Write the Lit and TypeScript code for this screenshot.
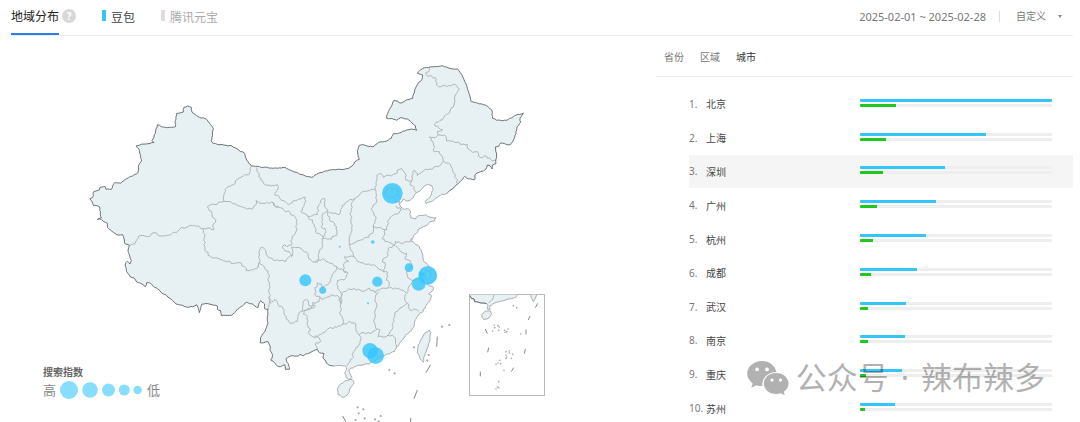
import { LitElement, html, svg, css } from "lit";
import { customElement, property, state } from "lit/decorators.js";

type Point = [number, number];

/* Map geometry is stored in tiles. Each tile has its own origin; one map unit is a third of a pixel. */
const parse = (ox: number, oy: number, data: string): Point[] =>
  data.trim().split(/\s+/).map((pair) => {
    const [x, y] = pair.split(",").map(Number);
    return [x + ox, y + oy] as Point;
  });

const west = (d: string) => parse(240, 270, d);
const centre = (d: string) => parse(690, 390, d);
const northEast = (d: string) => parse(1110, 165, d);
const south = (d: string) => parse(720, 720, d);
const east = (d: string) => parse(1110, 540, d);
const himalaya = (d: string) => parse(390, 780, d);
const southSea = (d: string) => parse(990, 1080, d);
const inset = (d: string) => parse(1380, 855, d);

/* Adds small repeatable bends so that borders and shores look natural. */
const roughen = (points: Point[], amount = 3.4): Point[] => {
  const out: Point[] = [points[0]];
  for (let i = 1; i < points.length; i++) {
    const [ax, ay] = points[i - 1];
    const [bx, by] = points[i];
    const length = Math.hypot(bx - ax, by - ay);
    const steps = Math.max(1, Math.round(length / 6));
    for (let s = 1; s < steps; s++) {
      const t = s / steps;
      const x = ax + (bx - ax) * t;
      const y = ay + (by - ay) * t;
      const noise = Math.sin(x * 12.9898 + y * 78.233) * 43758.5453;
      const shift = (noise - Math.floor(noise) - 0.5) * 2 * amount;
      out.push([x - ((by - ay) / length) * shift, y + ((bx - ax) / length) * shift]);
    }
    out.push([bx, by]);
  }
  return out;
};

const line = (points: Point[]) =>
  "M" + points.map(([x, y]) => `${x.toFixed(1)} ${y.toFixed(1)}`).join("L");

const landBorder = roughen([
  ...south(`280,378 268,376 258,366 249,352 252,340 238,338 232,328 222,332 210,338 196,342 190,348 180,343
    176,348 152,348 138,356 140,364 146,372 148,388 136,388 134,374 122,380 112,378 100,364 92,360 98,346
    92,334 90,318 84,305 72,308 60,308 62,292 72,278 80,262 84,250 82,232 84,208 74,206 74,192 62,182
    58,188 54,202`),
  ...himalaya(`380,142 370,134 350,127 332,140 322,148 310,162 304,166 274,167 272,152 262,148 262,138
    246,134 228,130 216,132 212,146 208,158 204,142 200,134 188,140 172,142 158,136 146,134 138,132
    128,122 118,114 106,104 94,98 84,88 70,78 62,70 50,68 46,80 36,72 20,66 12,54 0,50`),
  ...west(`140,545 136,522 142,514 150,522 154,512 148,494 144,480 148,466 134,460 128,434 110,434 96,424
    82,412 82,400 70,394 64,388 52,388 64,384 58,350 40,346 36,334 30,326 38,322 40,306 58,300 60,292
    76,290 78,298 94,298 104,278 122,280 140,266 174,248 176,226 184,214 182,196 176,176 168,168 186,162
    222,158 216,152 226,130 232,104 244,110 262,113 286,110 286,92 290,70 310,66 312,52 322,48 334,52
    336,66 358,82 380,88 392,104 400,116 396,142 394,152 400,160 420,164 456,168 476,180 494,190 500,210
    514,228`),
  ...centre(`100,112 130,115 165,112 185,122 210,133 245,142 270,128 298,120 330,118 355,116 366,108
    374,96 388,88 384,76 382,62 388,46 400,44 416,50`),
  ...northEast(`12,274 26,262 50,258 64,250 70,236 88,234 104,228 124,222 140,226 136,212 126,204 112,192
    92,188 80,196 66,190 50,190 50,182 58,164 72,136 94,144 112,134 128,130 134,104 146,82 156,74 158,60
    142,54 152,44 164,38 186,36 218,32 240,40 262,42 274,58 284,80 292,100 298,118 304,140 322,144
    346,150 366,166 368,190 380,196 410,196 434,182 460,174 456,182 450,190 452,202 442,214 438,236
    430,256 420,270 404,266 392,264 386,274 376,276 380,300 378,326 368,330 366,342 360,332 352,330
    348,342 340,348 332,350 316,358 314,374 296,372 284,364 274,376 262,388 252,398 240,406 232,414`),
], 1.4);

const coast = roughen([
  ...northEast(`232,414 214,418 196,430 182,440 168,446 166,440 176,430 184,418 190,404 186,392 172,388
    160,396 150,408 138,414 130,428 114,438 100,432 96,440 88,446 92,456 98,460 120,466 122,488 136,492 146,482 164,480
    180,486 198,488 194,498 180,500 168,512 150,520 134,538`),
  ...east(`122,182 134,190 148,200 158,222 160,242 172,254 178,262 196,280 198,296 182,308 170,312
    180,318 190,322 186,334 176,342 184,346 180,362 172,370 166,384 154,398 146,404 140,412 134,424
    132,440 118,456 106,466 98,480 86,496 80,502`),
  ...south(`464,334 448,342 432,346 410,358 384,372 360,376 344,380 328,388 330,400 336,412 326,418
    318,412 314,400 320,388 316,378 300,376 280,378`),
], 2.2);

const islands = [
  south("298,436 316,422 336,418 342,430 330,444 326,460 310,472 294,464 292,448 298,436"),
  east("162,462 178,450 182,458 180,480 170,510 162,530 160,547 150,536 142,518 144,500 152,480 162,462"),
].map((p) => roughen(p, 1.2));

const provinces = [
  west("148,466 164,462 176,438 208,440 222,428 240,438 262,436 290,428 300,416 324,410 344,407 372,416"),
  west("372,416 402,418 400,402 408,390 396,378 394,364 382,350 432,334"),
  west("432,334 430,326 440,294 460,284 472,268 490,258 506,254 510,234 514,230"),
  west("432,334 450,334 472,346 490,352 516,358 526,346 528,332 546,340 562,336 580,340 590,352 600,354"),
  west("368,416 374,440 374,480 390,498 420,508 460,520 480,518 496,532 498,542 520,540 534,530 538,516"),
  centre("84,412 88,398 90,358 98,352 108,366 112,378 130,390 168,394 178,380 188,376 188,360 184,352"),
  centre("88,398 104,412 114,430 120,470 118,490 122,520"),
  centre("80,112 92,150 112,166 142,164 144,176 134,190 150,206 176,224 190,212 214,206 226,202 228,214 212,244 222,250 234,260"),
  centre("234,260 250,256 262,254 264,230 272,212 284,206 284,228 294,246 278,252 278,270 274,292 286,296 288,306 278,320 270,312 256,306 254,290 248,270 234,260"),
  centre("294,246 298,268 320,290 320,316 306,320 304,328 276,326 278,316"),
  centre("298,248 328,254 332,238 346,218 360,208 374,206"),
  centre("276,326 278,346 266,372 266,388 256,396"),
  centre("150,234 180,248 198,266 200,300 186,320 184,346 158,348 162,358 180,370 184,382"),
  centre("150,234 126,216"),
  centre("184,352 204,352 230,366 236,386 256,396 284,388 300,400 318,408"),
  centre("318,408 320,420 306,440 300,456 282,470 262,458 256,480 254,494 270,500"),
  centre("318,408 340,422 354,430 342,450 322,452 322,474 334,490 330,510 332,522"),
  centre("270,500 280,508 300,500 304,494 316,498 326,500 332,522"),
  centre("218,544 230,540 246,530 248,518 268,514 270,502"),
  south("90,190 104,178 114,194 128,204 132,220 144,240 150,250 172,244 176,222 188,208 190,184 200,178 206,196 222,194"),
  south("90,168 84,208"),
  south("222,194 222,204 192,212 190,222 202,230 204,262 212,270 206,280 212,286 222,292 238,294 242,304 228,308 232,328"),
  south("302,192 304,206 300,224 310,240 306,254"),
  south("222,292 238,284 262,268 290,262 306,254 330,244 348,252 348,272 358,286"),
  south("358,286 362,300 354,320 342,334 336,356 320,378"),
  south("358,286 366,278 390,280 410,268"),
  south("410,268 404,250 404,220 410,200 404,180 408,164 416,156"),
  south("302,192 306,160 322,150 344,146 366,154 388,144 396,152 410,160"),
  centre("354,430 340,420 342,400 356,394 344,380 372,380 382,394 404,402 430,404 444,414 462,426"),
  centre("462,426 474,428 470,444 478,460 474,474 448,480 434,486"),
  centre("374,206 364,226 362,256 366,290 358,330 358,344 364,362 372,380"),
  centre("358,342 386,332 410,322 428,310"),
  centre("428,310 430,290 438,266 424,236 440,216 438,190 436,178"),
  centre("374,206 386,198 400,184 424,178 436,178"),
  centre("436,178 438,160 440,136 452,130 460,142 478,136 498,132 502,120 516,116 524,128 528,150 546,152"),
  northEast("126,376 128,350 134,346 142,362 156,350 180,342 210,332 220,318"),
  northEast("126,376 120,390 132,398 138,412"),
  northEast("220,318 214,300 208,290 192,290 190,266 178,246 196,248 206,240"),
  northEast("206,240 204,228 218,224 206,218 194,208 210,196 236,176 252,150 256,120 268,102 250,88 230,94 204,94 196,68 174,64 168,52 178,48 178,38"),
  northEast("206,240 224,240 230,258 260,262 276,268 292,268 294,282 308,292 322,290 332,308 350,304 362,314 378,316"),
  northEast("220,318 236,324 248,346 256,358 262,386"),
  centre("428,290 464,298 470,300 472,286 480,264 500,252 514,240 498,228"),
  centre("466,298 456,326 478,338 490,346"),
  centre("490,346 496,334 512,340 540,336 548,328"),
  centre("490,346 502,352 514,366 530,370 524,386 540,392 544,410 530,430 534,444 550,452"),
  centre("490,346 474,356 472,380 458,390 466,404 462,426"),
  centre("550,452 570,444 590,448"),
  centre("478,474 500,476 516,480 530,490 536,470 550,452"),
  centre("530,490 524,506 532,520 540,540 556,538 566,544"),
  centre("532,520 510,534 494,552 488,580"),
  south("458,250 456,268 444,286"),
  south("410,268 420,270 414,290 432,292 444,286 462,290 466,310 470,322"),
  northEast("50,400 62,398 68,404 84,402 84,418 72,426 50,422 46,410 50,400"),
  northEast("84,418 92,430 88,444 78,440 74,426"),
  east("168,268 178,274 184,290 174,300 164,294 168,268"),
].map((p) => roughen(p));

const seaMarks = [
  east("202,470 200,500"), east("182,554 168,578"), east("142,630 132,656"),
  east("122,714 122,726"), south("308,528 318,546"),
  inset("233,55 226,68"), inset("210,93 205,105"), inset("76,132 82,146"), inset("198,134 198,148"),
  inset("86,188 83,202"), inset("196,192 193,206"), inset("61,260 61,274"), inset("161,248 154,260"),
];

const reefs = [
  ...east("216,440 238,435 58,570 74,580 132,502 172,542 176,525"),
  ...southSea("83,142 100,148 86,160 77,180 104,175 135,178 152,168 146,184"),
];

const insetReefs = inset(`160,62 170,68 102,120 114,122 104,128 118,126 98,138 116,136 134,136 144,132
  140,140 135,142 182,147 138,200 148,204 158,208 138,210 140,216 138,220 154,220 148,198 120,226
  122,236 114,234 108,238 132,256 116,290 112,306 108,312 116,308`);

const insetLand = roughen(inset(`30,32 34,40 42,42 44,50 56,52 68,54 80,56 84,62 82,72 90,74 90,62 104,54
  124,48 144,42 166,38 172,29`), 1);
const insetBorder = roughen(inset("30,32 34,40 42,42 44,50 56,52 68,54 80,56"), 1);
const insetIslands = [
  inset("66,88 76,78 92,78 94,88 86,100 72,104 66,96 66,88"),
  inset("212,29 214,38 220,50 226,40 230,29"),
];

/* x, y and radius in map units */
const bubbles = [
  [1177, 580, 31], [1283, 826, 28], [1256, 852, 20.5], [1127, 1067, 25], [1110, 1052, 23],
  [916, 841, 18], [1132, 845, 15.5], [1227, 803, 13], [968, 871, 10.5], [1265, 823, 8],
  [1118, 726, 5.5], [1019, 740, 3], [1104, 910, 3],
];

interface City { name: string; primary: number; secondary: number; }

const cities: City[] = [
  { name: "北京", primary: 100, secondary: 18.6 },
  { name: "上海", primary: 65.8, secondary: 13.6 },
  { name: "深圳", primary: 44.4, secondary: 11.8 },
  { name: "广州", primary: 39.7, secondary: 8.8 },
  { name: "杭州", primary: 34.4, secondary: 6.6 },
  { name: "成都", primary: 29.7, secondary: 5.6 },
  { name: "武汉", primary: 23.9, secondary: 4.2 },
  { name: "南京", primary: 23.2, secondary: 4 },
  { name: "重庆", primary: 22, secondary: 3 },
  { name: "苏州", primary: 18, secondary: 2.8 },
];

@customElement("region-map")
class RegionMap extends LitElement {
  static styles = css`
    :host { display: block; position: relative; }
    .map { display: block; width: 100%; height: auto; }
    .land { fill: #e7f0f3; }
    .border { fill: none; stroke: #6e7377; stroke-width: 3; stroke-linejoin: round; }
    .shore { fill: none; stroke: #a9adb0; stroke-width: 3; stroke-linejoin: round; }
    .province { fill: none; stroke: #b1b6b9; stroke-width: 3; stroke-linejoin: round; }
    .dash { fill: none; stroke: #85898c; stroke-width: 3; }
    .reef { fill: #a3a7aa; }
    .frame { fill: #fff; stroke: #bbb; stroke-width: 3; }
    .bubble { fill: #33c5fb; fill-opacity: 0.8; }
    .legend { position: absolute; left: 32px; bottom: 22px; color: #666; }
    .title { font-size: 10px; line-height: 16px; font-weight: 700; }
    .scale { display: flex; align-items: center; gap: 4px; font-size: 13px; line-height: 20px; color: #888; }
    .dots { display: block; }
    .dot { fill: #88ddfc; }
  `;

  render() {
    return html`
      <svg class="map" viewBox="33 108 1935 1158" role="img" aria-label="地域分布">
        <path class="land" d=${line([...landBorder, ...coast]) + "Z"}></path>
        ${islands.map((p) => svg`<path class="land" d=${line(p)}></path><path class="shore" d=${line(p)}></path>`)}
        ${provinces.map((p) => svg`<path class="province" d=${line(p)}></path>`)}
        <path class="shore" d=${line(coast)}></path>
        <path class="border" d=${line(landBorder)}></path>
        ${reefs.map(([x, y]) => svg`<circle class="reef" cx=${x} cy=${y} r="3.2"></circle>`)}
        <rect class="frame" x="1408.500" y="883.500" width="225" height="303"></rect>
        <path class="land" d=${line([...insetLand, ...inset("30,29")]) + "Z"}></path>
        <path class="shore" d=${line(insetLand)}></path>
        <path class="province" d=${line(inset("102,30 98,42 86,54"))}></path>
        <path class="border" d=${line(insetBorder)}></path>
        ${insetIslands.map((p) => svg`<path class="land" d=${line(p)}></path><path class="shore" d=${line(p)}></path>`)}
        ${insetReefs.map(([x, y]) => svg`<circle class="reef" cx=${x} cy=${y} r="2.5"></circle>`)}
        ${seaMarks.map((p) => svg`<path class="dash" d=${line(p)}></path>`)}
        ${bubbles.map(([x, y, r]) => svg`<circle class="bubble" cx=${x} cy=${y} r=${r}></circle>`)}
      </svg>
      <div class="legend">
        <div class="title">搜索指数</div>
        <div class="scale">
          <span>高</span>
          <svg class="dots" width="83" height="18" viewBox="0 0 83 18" aria-hidden="true">
            <circle class="dot" cx="9" cy="9" r="9"></circle>
            <circle class="dot" cx="30" cy="9" r="7.800"></circle>
            <circle class="dot" cx="48.500" cy="9" r="6.500"></circle>
            <circle class="dot" cx="64.300" cy="9" r="5.500"></circle>
            <circle class="dot" cx="77.600" cy="9" r="4.300"></circle>
          </svg>
          <span>低</span>
        </div>
      </div>
    `;
  }
}

@customElement("city-ranking")
class CityRanking extends LitElement {
  @property({ attribute: false }) items: City[] = [];
  @state() private scope = "城市";
  @state() private active = 2;

  static styles = css`
    :host { display: block; }
    .scopes { display: flex; gap: 16px; height: 40px; padding: 0 8px; border-bottom: 1px solid #eee; }
    .scope { padding: 1px 0 0; border: 0; background: none; font: inherit; font-size: 10px; line-height: 20px; color: #777; cursor: pointer; }
    .scope.on { color: #333; }
    .list { display: grid; grid-auto-rows: 1fr; height: 338px; margin: 10px 0 0 33px; padding: 0; list-style: none; }
    .row { display: grid; grid-template-columns: 17px 1fr 50%; align-items: center; padding-right: 21px; font-size: 10px; color: #444; }
    .row.on { background: #f5f5f5; }
    .rank { color: #777; white-space: nowrap; }
    .bars { display: grid; gap: 2px; width: 192px; justify-self: end; padding-bottom: 2px; }
    .track { height: 3px; border-radius: 1px; background: #eee; overflow: hidden; }
    .fill { height: 3px; background: #35c5f9; }
    .fill.second { background: #1fc81f; }
  `;

  render() {
    return html`
      <div class="scopes">
        ${["省份", "区域", "城市"].map((s) => html`
          <button class="scope ${s === this.scope ? "on" : ""}" @click=${() => (this.scope = s)}>${s}</button>`)}
      </div>
      <ol class="list">
        ${this.items.map((c, i) => html`
          <li class="row ${i === this.active ? "on" : ""}" @mouseenter=${() => (this.active = i)}>
            <span class="rank">${i + 1}.</span>
            <span>${c.name}</span>
            <div class="bars">
              <div class="track"><div class="fill" style="width:${c.primary}%"></div></div>
              <div class="track"><div class="fill second" style="width:${c.secondary}%"></div></div>
            </div>
          </li>`)}
      </ol>
    `;
  }
}

@customElement("app-root")
class AppRoot extends LitElement {
  static styles = css`
    :host {
      display: block; position: relative; height: 100vh; overflow: hidden; box-sizing: border-box;
      padding: 0 7px 0 11px; background: #fff; color: #333;
      font-family: "Noto Sans", "Noto Sans CJK SC", sans-serif;
    }
    .header { display: flex; align-items: stretch; height: 35px; border-bottom: 1px solid #eee; font-size: 12px; line-height: 33px; }
    .heading { margin: 0; font-size: 12px; font-weight: 400; color: #222; border-bottom: 2px solid #2b7de9; box-sizing: border-box; height: 35px; }
    .help { align-self: center; margin: 0 26px 4px 3px; padding: 0; border: 0; width: 14px; height: 14px; border-radius: 50%; background: #d8d8d8; color: #fff; font: 700 10px/14px "Noto Sans", sans-serif; }
    .series { display: flex; align-items: center; gap: 5px; height: 34px; margin-right: 26px; padding: 0; border: 0; background: none; font: inherit; color: #444; }
    .series.off { color: #aaa; }
    .swatch { width: 4px; height: 11px; margin-bottom: 4px; background: #35c5f9; }
    .series.off .swatch { background: #ddd; }
    .range { display: flex; align-items: center; height: 33px; margin-left: auto; font-size: 11px; color: #777; }
    .divider { width: 1px; height: 11px; margin: 0 16px 0 13px; background: #ddd; }
    .period { display: flex; align-items: center; gap: 12px; padding-right: 11px; }
    .choice { appearance: none; border: 0; padding: 0; margin: 0; background: none; font: inherit; font-size: 10px; color: #777; }
    .caret { display: block; }
    .content { display: grid; grid-template-columns: 645fr 417fr; align-items: start; }
    .mark { position: absolute; right: 35px; bottom: 22px; display: flex; align-items: center; gap: 7px; opacity: 0.3; color: #000; font-size: 31px; line-height: 46px; pointer-events: none; }
    .words { display: flex; gap: 12px; }
    .logo { display: block; }
  `;

  render() {
    return html`
      <header class="header">
        <h1 class="heading">地域分布</h1>
        <button class="help" aria-label="帮助">?</button>
        <button class="series"><span class="swatch"></span>豆包</button>
        <button class="series off"><span class="swatch"></span>腾讯元宝</button>
        <div class="range">
          <span>2025-02-01 ~ 2025-02-28</span>
          <span class="divider"></span>
          <label class="period">
            <select class="choice" aria-label="时间范围"><option>自定义</option></select>
            <svg class="caret" width="4" height="3" viewBox="0 0 4 3" aria-hidden="true"><path d="M0 0h4L2 3z" fill="#888"></path></svg>
          </label>
        </div>
      </header>
      <main class="content">
        <region-map></region-map>
        <city-ranking .items=${cities}></city-ranking>
      </main>
      <div class="mark">
        <svg class="logo" width="42" height="35" viewBox="0 0 42 35" aria-hidden="true">
          <path fill="#000" fill-rule="evenodd" d="M15 1C6.800 1 .2 6.600.2 13.600c0 4 2.100 7.500 5.500 9.800L4.300 27.800l5.200-2.600c1.900.6 3.800.9 5.900.9C14.500 18.500 20.500 12.200 29.500 12 28 5.600 22.200 1 15 1zM10 7.500a1.900 1.900 0 1 1 0 3.800 1.900 1.900 0 0 1 0-3.800zm10 0a1.900 1.900 0 1 1 0 3.800 1.900 1.900 0 0 1 0-3.800z"></path>
          <path fill="#000" fill-rule="evenodd" d="M29.200 13c-6.900 0-12.400 4.700-12.400 10.500S22.300 34 29.200 34c1.600 0 3.200-.3 4.600-.7l4 2-1-3.500c2.900-2 4.800-5 4.800-8.300C41.600 17.700 36 13 29.200 13zM25 18.500a1.600 1.600 0 1 1 0 3.200 1.600 1.600 0 0 1 0-3.200zm8.500 0a1.600 1.600 0 1 1 0 3.200 1.600 1.600 0 0 1 0-3.200z"></path>
        </svg>
        <div class="words"><span>公众号</span><span>·</span><span>辣布辣多</span></div>
      </div>
    `;
  }
}
